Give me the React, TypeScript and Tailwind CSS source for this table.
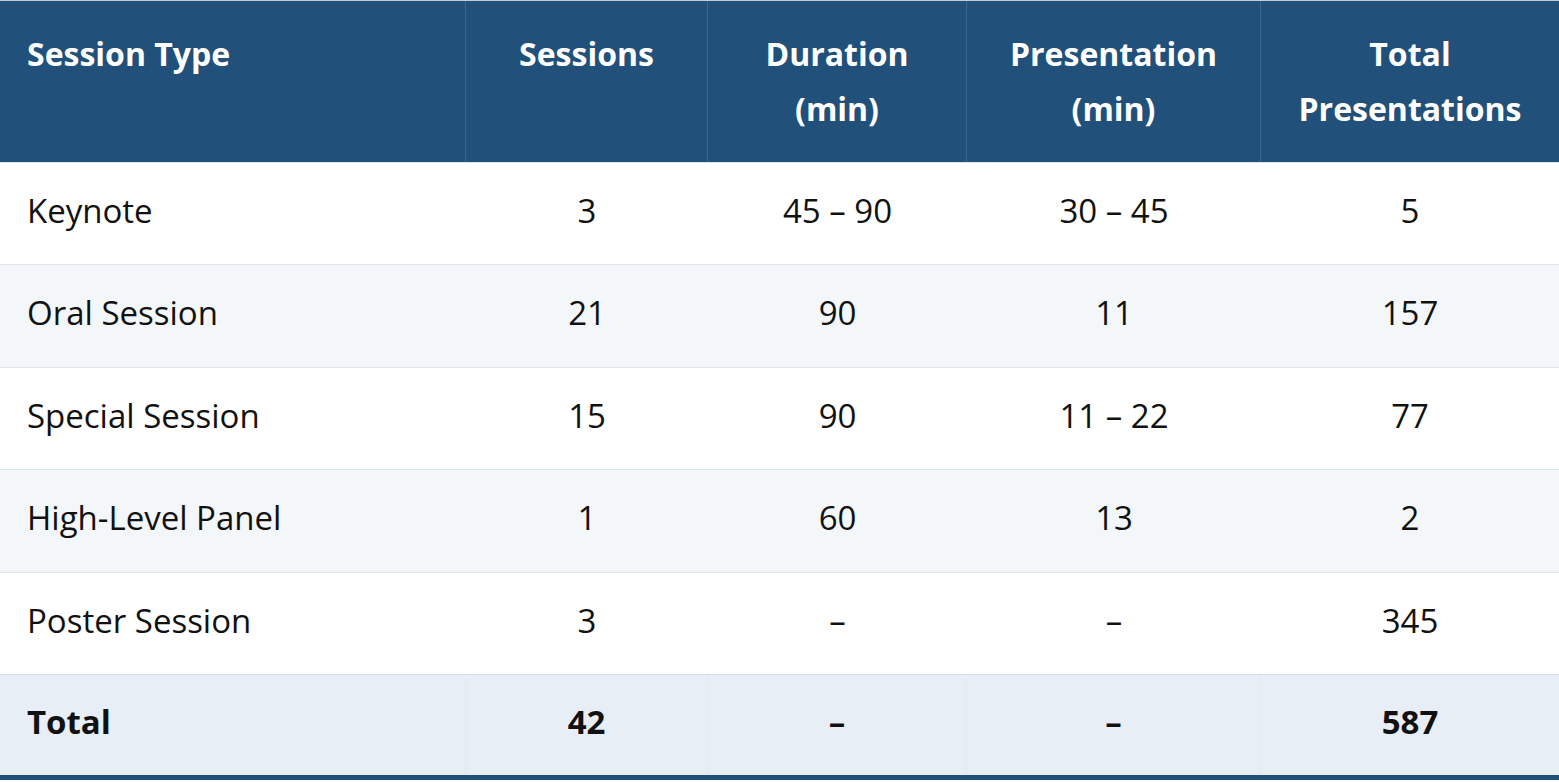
import React from "react";

const rows = [
  ["Keynote", "3", "45 – 90", "30 – 45", "5"],
  ["Oral Session", "21", "90", "11", "157"],
  ["Special Session", "15", "90", "11 – 22", "77"],
  ["High-Level Panel", "1", "60", "13", "2"],
  ["Poster Session", "3", "–", "–", "345"],
];

const cols = "grid grid-cols-[466px_242px_259px_294px_298px]";

export default function App() {
  return (
    <div className="w-[1559px] h-[782px] bg-white text-[33px] text-[#111] [font-family:'Open_Sans',sans-serif]">
      <div className="border-t border-[#c3ccd6] border-b-[5px] border-b-[#21507a]">
        <div className={`${cols} bg-[#21507a] text-white font-bold text-[32px] leading-[55px] h-[161px]`}>
          <div className="pl-[27px] pt-[25px] border-r border-[#3a6690]">Session Type</div>
          <div className="text-center pt-[25px] border-r border-[#3a6690]">Sessions</div>
          <div className="text-center pt-[25px] border-r border-[#3a6690]">Duration<br />(min)</div>
          <div className="text-center pt-[25px] border-r border-[#3a6690]">Presentation<br />(min)</div>
          <div className="text-center pt-[25px]">Total<br />Presentations</div>
        </div>
        {rows.map((r, i) => (
          <div
            key={i}
            className={`${cols} h-[102.4px] border-t border-[#dfe4ea] ${i % 2 === 1 ? "bg-[#f4f7fa]" : "bg-white"}`}
          >
            {r.map((c, j) => (
              <div
                key={j}
                className={`flex items-center pb-[6px] ${j === 0 ? "pl-[27px]" : "justify-center"}`}
              >
                {c}
              </div>
            ))}
          </div>
        ))}
        <div className={`${cols} h-[101px] border-t border-[#d3dbe6] bg-[#e8eef6] font-bold`}>
          {["Total", "42", "–", "–", "587"].map((c, j) => (
            <div
              key={j}
              className={`flex items-center pb-[6px] ${j === 0 ? "pl-[27px]" : "justify-center"} ${j < 4 ? "border-r border-[#e3e9f1]" : ""}`}
            >
              {c}
            </div>
          ))}
        </div>
      </div>
    </div>
  );
}
